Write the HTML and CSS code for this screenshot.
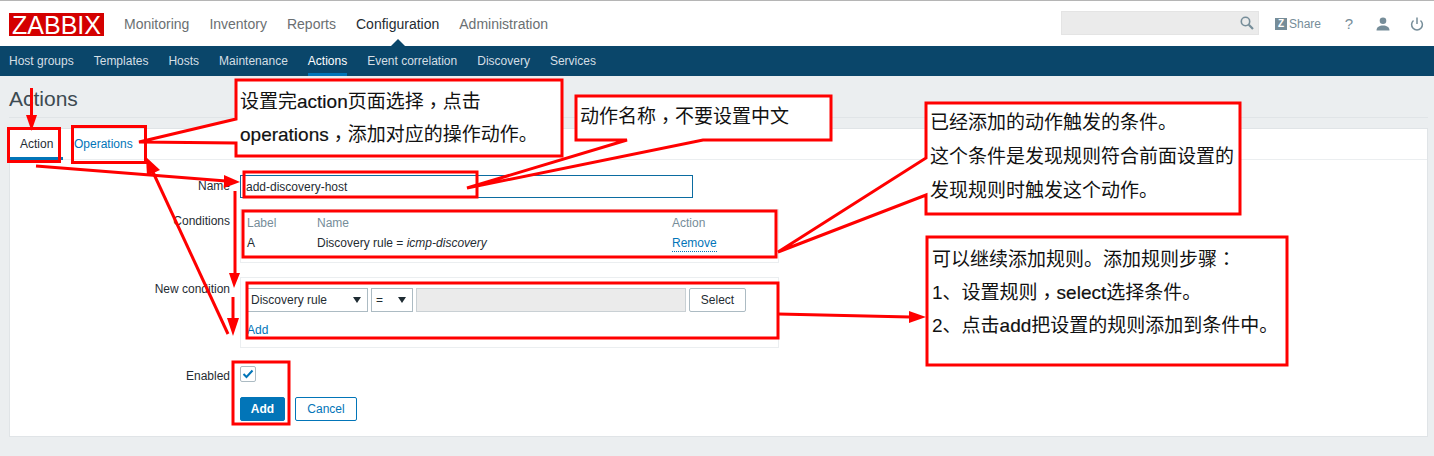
FILE: index.html
```html
<!DOCTYPE html>
<html lang="en">
<head>
    <meta charset="UTF-8">
    <title>Actions</title>
    <link rel="stylesheet" href="styles.css">
</head>
<body>
    <header class="topbar">
        <div class="logo">ZABBIX</div>
        <ul class="topnav">
            <li>Monitoring</li>
            <li>Inventory</li>
            <li>Reports</li>
            <li class="on">Configuration</li>
            <li>Administration</li>
        </ul>
        <div class="tools">
            <div class="search">
                <svg width="16" height="16" viewBox="0 0 16 16"><circle cx="6.5" cy="6.5" r="4.2" fill="none" stroke="#768d99" stroke-width="1.6"/><path d="M9.8 9.8L14 14" stroke="#768d99" stroke-width="2.2"/></svg>
            </div>
            <div class="share"><span class="zmark">Z</span>Share</div>
            <div class="tool help">?</div>
            <div class="tool">
                <svg width="16" height="14" viewBox="0 0 16 14"><circle cx="8" cy="3.8" r="3.3" fill="#768d99"/><path d="M1.5 13.5c0-3.6 3-5 6.500-5s6.500 1.400 6.500 5z" fill="#768d99"/></svg>
            </div>
            <div class="tool">
                <svg width="14" height="14" viewBox="0 0 14 14"><path d="M3.500 3.500a5.400 5.400 0 1 0 7 0" fill="none" stroke="#768d99" stroke-width="1.500"/><path d="M7 0.500v6.500" stroke="#768d99" stroke-width="1.500"/></svg>
            </div>
        </div>
    </header>
    <nav class="subnav">
        <a>Host groups</a>
        <a>Templates</a>
        <a>Hosts</a>
        <a>Maintenance</a>
        <a class="on">Actions</a>
        <a>Event correlation</a>
        <a>Discovery</a>
        <a>Services</a>
    </nav>
    <main class="page">
        <h1 class="title">Actions</h1>
        <section class="box">
            <ul class="tabs">
                <li class="on">Action</li>
                <li>Operations</li>
            </ul>
            <form class="form">
                <label class="lbl">Name</label>
                <input class="name-input" type="text" value="add-discovery-host">

                <label class="lbl lbl-cond">Conditions</label>
                <div class="block cond">
                    <div class="cond-row cond-head"><span>Label</span><span>Name</span><span>Action</span></div>
                    <div class="cond-row"><span>A</span><span>Discovery rule = <i>icmp-discovery</i></span><span><a class="remove">Remove</a></span></div>
                </div>

                <label class="lbl lbl-new">New condition</label>
                <div class="block newcond">
                    <div class="newcond-row">
                        <div class="sel sel-rule">Discovery rule<b></b></div>
                        <div class="sel sel-op">=<b></b></div>
                        <div class="value"></div>
                        <div class="btn-select">Select</div>
                    </div>
                    <a class="add-link">Add</a>
                </div>

                <label class="lbl lbl-enabled">Enabled</label>
                <div class="check">
                    <svg width="12" height="10" viewBox="0 0 12 10"><path d="M1.500 5l3 3 6-6.500" fill="none" stroke="#0275b8" stroke-width="2"/></svg>
                </div>

                <div class="actions">
                    <button class="btn btn-add" type="button">Add</button>
                    <button class="btn btn-cancel" type="button">Cancel</button>
                </div>
            </form>
        </section>
    </main>

    <!-- annotations drawn on top of the screenshot -->
    <svg class="marks" width="1434" height="456" viewBox="0 0 1434 456">
        <g fill="#fff" stroke="#f00" stroke-width="3">
            <polygon points="236,80 562,80 562,156 236,156 236,143 139,142 236,119"/>
            <polygon points="576,96 831,96 831,140 703,140 467,188 627,140 576,140"/>
            <polygon points="926,103 1240,103 1240,214 926,214 926,195 778,252 926,158"/>
            <rect x="927" y="237" width="360" height="128"/>
        </g>
        <g fill="none" stroke="#f00" stroke-width="3">
            <rect x="8.500" y="128.500" width="51" height="33"/>
            <rect x="72.500" y="126.500" width="73" height="36"/>
            <rect x="244" y="172" width="233" height="25"/>
            <rect x="243" y="211" width="533" height="46"/>
            <rect x="247" y="283" width="531" height="55"/>
            <rect x="233" y="362" width="56" height="62"/>
            <path d="M31.500 88V116"/>
            <path d="M36 166L226 181"/>
            <path d="M235 191V275"/>
            <path d="M233 297V320"/>
            <path d="M228 334L152 170"/>
            <path d="M778 314L910 317"/>
        </g>
        <g fill="#f00">
            <polygon points="31.500,131 26,115 37,115"/>
            <polygon points="240,182 224,175 224,188"/>
            <polygon points="234,288 229,273 240,273"/>
            <polygon points="233,336 227,318 239,318"/>
            <polygon points="146,157 147,176 160,170"/>
            <polygon points="926,317 909,311 909,323"/>
        </g>
    </svg>
    <div class="note note1">设置完<span class="en">action</span>页面选择<span class="tc cm">，</span>点击<br><span class="en">operations</span><span class="tc cm">，</span>添加对应的操作动作。</div>
    <div class="note note2">动作名称<span class="tc cm">，</span>不要设置中文</div>
    <div class="note note3">已经添加的动作触发的条件。<br>这个条件是发现规则符合前面设置的<br>发现规则时触发这个动作。</div>
    <div class="note note4">可以继续添加规则。添加规则步骤<span class="tc">：</span><br>1、设置规则<span class="tc cm">，</span><span class="en">select</span>选择条件。<br>2、点击<span class="en">add</span>把设置的规则添加到条件中。</div>
</body>
</html>
```

FILE: styles.css
```css
*{box-sizing: border-box;}
html, body{margin:0; padding:0;}
body{position:relative; width:1434px; height:456px; overflow:hidden; background:#ebeef0; color:#1f2c33; font-family:"Liberation Sans", Arial, sans-serif; font-size:12px;}
ul{list-style:none; margin:0; padding:0;}

/* top bar */
.topbar{display:flex; align-items:center; height:46px; background:#fff; border-top:1px solid #b5b5b5; padding:0 0 0 9px;}
.logo{width:95px; height:23px; margin-top:1px; background:#d40000; color:#fff; font-size:25px; line-height:24px; text-align:center;}
.topnav{display:flex; gap:20px; margin-left:20px; font-size:14px; color:#6b6f72;}
.topnav li{position:relative; line-height:46px; height:45px;}
.topnav li.on{color:#1f2c33;}
.topnav li.on:after{content:""; position:absolute; left:50%; bottom:0; margin-left:-7px; border:7px solid transparent; border-top:0; border-bottom-color:#0a466a;}
.tools{display:flex; align-items:center; margin-left:auto;}
.search{display:flex; align-items:center; justify-content:flex-end; width:198px; height:24px; padding-right:3px; margin-top:-1px; background:#ebebeb; border:1px solid #e4e4e4;}
.share{display:flex; align-items:center; margin-left:16px; width:57px; color:#768d99; font-size:12px;}
.zmark{width:12px; height:12px; margin-right:2px; background:#768d99; color:#fff; font-size:10px; font-weight:bold; line-height:12px; text-align:center;}
.tool{display:flex; justify-content:center; width:34px; color:#768d99;}
.help{font-size:15px;}

/* second menu */
.subnav{display:flex; gap:20px; height:30px; padding-left:9px; background:#0a466a;}
.subnav a{height:30px; line-height:30px; color:#d5dfe5;}
.subnav a.on{color:#fff; border-bottom:3px solid #0275b8;}

.page{padding:0 6px 0 9px;}
.title{height:42px; margin:0; padding-top:11px; font-size:21px; line-height:24px; font-weight:normal; color:#3c4a52; border-bottom:1px solid #e0e4e7;}
.box{width:1419px; height:309px; margin-top:10px; background:#fff; border:1px solid #e0e4e7;}

.tabs{display:flex; height:31px; border-bottom:1px solid #ebeef0; color:#0275b8;}
.tabs li{padding:0 10px; line-height:31px; height:31px;}
.tabs li.on{width:53px; color:#1f2c33; border-bottom:3px solid #0275b8;}
.tabs li:nth-child(2){margin-left:1px;}

/* form */
.form{display:grid; grid-template-columns:220px 539px; column-gap:10px; padding-top:15px;}
.lbl{text-align:right; line-height:23px;}
.name-input{width:453px; height:23px; padding:0 5px; border:1px solid #0b6ca1; font:12px "Liberation Sans", Arial, sans-serif; color:#1f2c33;}
.block{border:1px solid #ebeef0;}
.lbl-cond{padding-top:12px;}
.cond{height:54px; margin-top:11px; padding:3px 6px 0;}
.cond-row{display:grid; grid-template-columns:70px 355px 100px; line-height:20px;}
.cond-head{color:#768d99;}
.remove{color:#0275b8; border-bottom:1px dotted #0275b8; padding-bottom:1px;}
.lbl-new{padding-top:15px;}
.newcond{height:71px; margin-top:14px; padding:10px 5px 0;}
.newcond-row{display:flex; gap:3px;}
.sel{position:relative; height:24px; padding-left:4px; line-height:22px; background:#fff; border:1px solid #acbbc3;}
.sel b{position:absolute; right:6px; top:8px; border:4px solid transparent; border-top:6px solid #1f2c33; border-bottom:0;}
.sel-rule{width:122px;}
.sel-op{width:42px;}
.value{width:270px; height:24px; background:#ebebeb; border:1px solid #c9d0d4;}
.btn-select{width:57px; height:24px; line-height:22px; text-align:center; background:#fff; border:1px solid #acbbc3; border-radius:2px;}
.add-link{display:block; margin-top:11px; margin-left:1px; color:#0275b8; line-height:14px;}
.lbl-enabled{padding-top:13px; line-height:30px; height:40px;}
.check{display:flex; align-items:center; justify-content:center; width:16px; height:16px; margin-top:18px; border:1px solid #acbbc3; border-radius:2px;}
.actions{grid-column:2; display:flex; gap:10px; margin-top:9px;}
.btn{height:24px; border-radius:2px; font:12px "Liberation Sans", Arial, sans-serif;}
.btn-add{width:45px; background:#0275b8; border:1px solid #0275b8; color:#fff; font-weight:bold;}
.btn-cancel{width:62px; background:#fff; border:1px solid #0275b8; color:#0275b8;}

/* annotations */
.marks{position:absolute; left:0; top:0;}
.note{position:absolute; font-family:"Liberation Sans", "Noto Sans CJK SC", sans-serif; font-size:19px; line-height:33px; color:#111; white-space:nowrap;}
.en{-webkit-text-stroke:0.2px #111;}
.tc{font-family:"Noto Sans CJK TC", sans-serif; line-height:0;}
.cm{vertical-align:-5px;}
.note1{left:240px; top:85px;}
.note2{left:580px; top:100px;}
.note3{left:930px; top:106px; line-height:34px;}
.note4{left:932px; top:243px;}
```
